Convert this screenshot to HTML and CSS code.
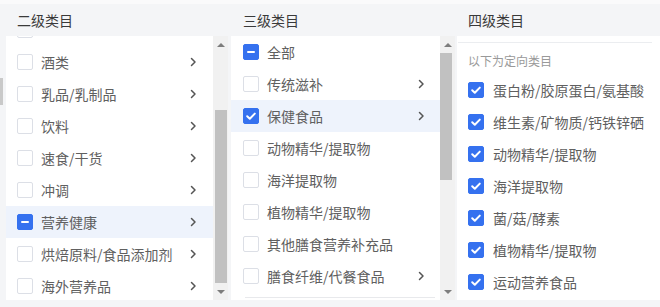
FILE: index.html
```html
<!DOCTYPE html>
<html lang="zh-CN">

<head>
    <meta charset="UTF-8">
    <meta name="viewport" content="width=device-width, initial-scale=1.0">
    <title>类目选择</title>
    <link rel="stylesheet" href="styles.css">
</head>

<body>
    <div class="picker">
        <!-- 二级类目 -->
        <section class="col col-second">
            <div class="col-head">二级类目</div>
            <div class="col-body">
                <div class="edge"><span class="edge-thumb"></span></div>
                <ul class="list list-scrolled">
                    <li class="row"><span class="box"></span><span class="label"></span></li>
                    <li class="row"><span class="box"></span><span class="label">酒类</span>
                        <svg class="chev" width="7" height="10" viewBox="0 0 7 10"><polyline points="1.5,1.5 5,5 1.5,8.5" /></svg></li>
                    <li class="row"><span class="box"></span><span class="label">乳品/乳制品</span>
                        <svg class="chev" width="7" height="10" viewBox="0 0 7 10"><polyline points="1.5,1.5 5,5 1.5,8.5" /></svg></li>
                    <li class="row"><span class="box"></span><span class="label">饮料</span>
                        <svg class="chev" width="7" height="10" viewBox="0 0 7 10"><polyline points="1.5,1.5 5,5 1.5,8.5" /></svg></li>
                    <li class="row"><span class="box"></span><span class="label">速食/干货</span>
                        <svg class="chev" width="7" height="10" viewBox="0 0 7 10"><polyline points="1.5,1.5 5,5 1.5,8.5" /></svg></li>
                    <li class="row"><span class="box"></span><span class="label">冲调</span>
                        <svg class="chev" width="7" height="10" viewBox="0 0 7 10"><polyline points="1.5,1.5 5,5 1.5,8.5" /></svg></li>
                    <li class="row active"><span class="box half"></span><span class="label">营养健康</span>
                        <svg class="chev" width="7" height="10" viewBox="0 0 7 10"><polyline points="1.5,1.5 5,5 1.5,8.5" /></svg></li>
                    <li class="row"><span class="box"></span><span class="label">烘焙原料/食品添加剂</span>
                        <svg class="chev" width="7" height="10" viewBox="0 0 7 10"><polyline points="1.5,1.5 5,5 1.5,8.5" /></svg></li>
                    <li class="row"><span class="box"></span><span class="label">海外营养品</span>
                        <svg class="chev" width="7" height="10" viewBox="0 0 7 10"><polyline points="1.5,1.5 5,5 1.5,8.5" /></svg></li>
                </ul>
                <div class="scrollbar">
                    <span class="arrow up"></span>
                    <span class="thumb thumb-second"></span>
                    <span class="arrow down"></span>
                </div>
            </div>
        </section>

        <!-- 三级类目 -->
        <section class="col col-third">
            <div class="col-head">三级类目</div>
            <div class="col-body">
                <div class="list-wrap">
                    <ul class="list">
                        <li class="row"><span class="box half"></span><span class="label">全部</span></li>
                        <li class="row"><span class="box"></span><span class="label">传统滋补</span>
                            <svg class="chev" width="7" height="10" viewBox="0 0 7 10"><polyline points="1.5,1.5 5,5 1.5,8.5" /></svg></li>
                        <li class="row active"><span class="box checked"><svg width="16" height="16" viewBox="0 0 16 16"><path d="M4.2 8.3l2.6 2.5 5-5.2" /></svg></span><span class="label">保健食品</span>
                            <svg class="chev" width="7" height="10" viewBox="0 0 7 10"><polyline points="1.5,1.5 5,5 1.5,8.5" /></svg></li>
                        <li class="row"><span class="box"></span><span class="label">动物精华/提取物</span></li>
                        <li class="row"><span class="box"></span><span class="label">海洋提取物</span></li>
                        <li class="row"><span class="box"></span><span class="label">植物精华/提取物</span></li>
                        <li class="row"><span class="box"></span><span class="label">其他膳食营养补充品</span></li>
                        <li class="row"><span class="box"></span><span class="label">膳食纤维/代餐食品</span>
                            <svg class="chev" width="7" height="10" viewBox="0 0 7 10"><polyline points="1.5,1.5 5,5 1.5,8.5" /></svg></li>
                    </ul>
                    <div class="list-divider"></div>
                </div>
                <div class="scrollbar">
                    <span class="arrow up"></span>
                    <span class="thumb thumb-third"></span>
                    <span class="arrow down"></span>
                </div>
            </div>
        </section>

        <!-- 四级类目 -->
        <section class="col col-fourth">
            <div class="col-head">四级类目</div>
            <div class="col-body">
                <div class="list-wrap">
                    <div class="head-line"></div>
                    <div class="note">以下为定向类目</div>
                    <ul class="list">
                        <li class="row"><span class="box checked"><svg width="16" height="16" viewBox="0 0 16 16"><path d="M4.2 8.3l2.6 2.5 5-5.2" /></svg></span><span class="label">蛋白粉/胶原蛋白/氨基酸</span></li>
                        <li class="row"><span class="box checked"><svg width="16" height="16" viewBox="0 0 16 16"><path d="M4.2 8.3l2.6 2.5 5-5.2" /></svg></span><span class="label">维生素/矿物质/钙铁锌硒</span></li>
                        <li class="row"><span class="box checked"><svg width="16" height="16" viewBox="0 0 16 16"><path d="M4.2 8.3l2.6 2.5 5-5.2" /></svg></span><span class="label">动物精华/提取物</span></li>
                        <li class="row"><span class="box checked"><svg width="16" height="16" viewBox="0 0 16 16"><path d="M4.2 8.3l2.6 2.5 5-5.2" /></svg></span><span class="label">海洋提取物</span></li>
                        <li class="row"><span class="box checked"><svg width="16" height="16" viewBox="0 0 16 16"><path d="M4.2 8.3l2.6 2.5 5-5.2" /></svg></span><span class="label">菌/菇/酵素</span></li>
                        <li class="row"><span class="box checked"><svg width="16" height="16" viewBox="0 0 16 16"><path d="M4.2 8.3l2.6 2.5 5-5.2" /></svg></span><span class="label">植物精华/提取物</span></li>
                        <li class="row"><span class="box checked"><svg width="16" height="16" viewBox="0 0 16 16"><path d="M4.2 8.3l2.6 2.5 5-5.2" /></svg></span><span class="label">运动营养食品</span></li>
                    </ul>
                </div>
            </div>
        </section>
    </div>
</body>

</html>
```

FILE: styles.css
```css
body {
    margin: 0;
    padding: 0;
    background-color: #f4f5f7;
    font-family: "Noto Sans CJK SC", "Noto Sans", sans-serif;
    color: #606060;
    font-size: 14px;
}

.picker {
    display: flex;
    border-top: 4px solid #fafafb;
    height: 303px;
    overflow: hidden;
}

.col {
    display: flex;
    flex-direction: column;
}

.col-second {
    width: 228px;
    margin-right: 3px;
}

.col-third {
    width: 224px;
    margin-right: 2px;
}

.col-fourth {
    flex: 1;
}

.col-head {
    height: 32px;
    line-height: 32px;
    color: #3a3a3a;
    padding-left: 12px;
}

.col-second .col-head {
    padding-left: 17px;
}

.col-fourth .col-head {
    padding-left: 11px;
}

.col-body {
    display: flex;
    height: 264px;
}

/* left edge of the parent panel */
.edge {
    width: 6px;
    background-color: #f4f5f7;
}

.edge-thumb {
    display: block;
    width: 3px;
    height: 27px;
    margin-top: 42px;
    background-color: #c9c9c9;
}

.list {
    list-style: none;
    margin: 0;
    padding: 0;
    background-color: #ffffff;
}

.col-second .list {
    flex: 1;
    overflow: hidden;
}

.list-scrolled .row:first-child {
    margin-top: -22px;
}

.list-wrap {
    flex: 1;
    background-color: #ffffff;
    overflow: hidden;
}

.row {
    display: flex;
    align-items: center;
    height: 32px;
    padding-left: 11px;
    padding-right: 16px;
    white-space: nowrap;
}

.col-third .row {
    padding-left: 12px;
    padding-right: 15px;
}

.col-fourth .row {
    padding-left: 11px;
}

.row.active {
    background-color: #eef3fc;
}

.box {
    width: 16px;
    height: 16px;
    box-sizing: border-box;
    border: 1px solid #dcdfe6;
    border-radius: 2px;
    background-color: #fff;
    margin-right: 8px;
    flex-shrink: 0;
    display: flex;
    align-items: center;
    justify-content: center;
}

.col-fourth .box {
    margin-right: 9px;
}

.box.checked,
.box.half {
    background-color: #3571ef;
    border-color: #3571ef;
}

.box.checked svg {
    display: block;
    margin: -1px;
}

.box.checked path {
    fill: none;
    stroke: #ffffff;
    stroke-width: 2;
    stroke-linecap: round;
    stroke-linejoin: round;
}

.box.half::after {
    content: "";
    width: 8px;
    height: 2px;
    background-color: #ffffff;
    border-radius: 1px;
}

.label {
    flex: 1;
    line-height: 20px;
}

.chev {
    flex-shrink: 0;
}

.chev polyline {
    fill: none;
    stroke: #555;
    stroke-width: 1.5;
    stroke-linecap: round;
    stroke-linejoin: round;
}

.list-divider {
    height: 1px;
    margin: 5px 5px 0 14px;
    background-color: #e8e9ec;
}

.scrollbar {
    width: 15px;
    background-color: #f1f1f1;
    display: flex;
    flex-direction: column;
}

.arrow {
    height: 17px;
    display: flex;
    align-items: center;
    justify-content: center;
}

.arrow::after {
    content: "";
    border-left: 4px solid transparent;
    border-right: 4px solid transparent;
}

.arrow.up::after {
    border-bottom: 4px solid #7d7d7d;
}

.arrow.down {
    margin-top: auto;
}

.arrow.down::after {
    border-top: 4px solid #7d7d7d;
}

.thumb {
    display: block;
    width: 12px;
    margin-left: 2px;
    background-color: #c1c1c1;
}

.thumb-second {
    margin-top: 57px;
    height: 173px;
}

.thumb-third {
    margin-left: 0;
    height: 127px;
}

.head-line {
    height: 6px;
    margin: 0 8px 0 1px;
    border-bottom: 1px solid #ebedf0;
}

.note {
    padding-left: 11px;
    padding-top: 4px;
    height: 27px;
    line-height: 27px;
    font-size: 12px;
    color: #999;
}
```
